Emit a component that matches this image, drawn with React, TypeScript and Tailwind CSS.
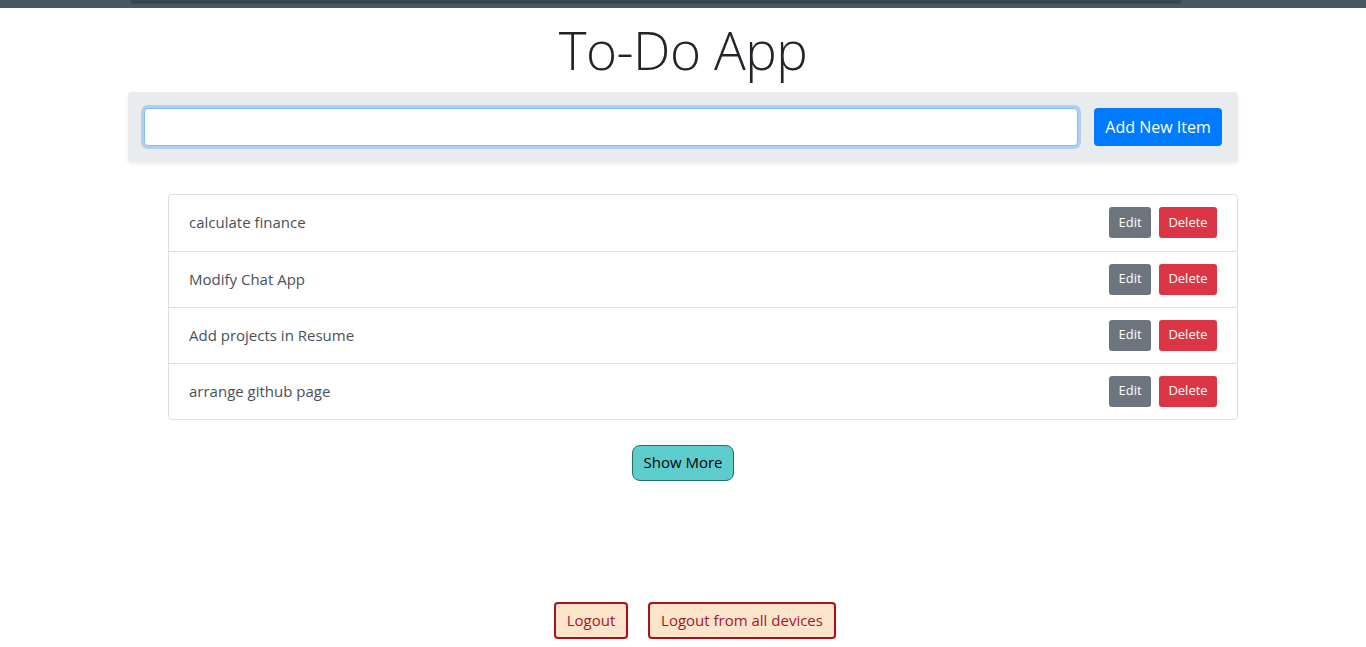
import { useState } from 'react'

const todos = ['calculate finance', 'Modify Chat App', 'Add projects in Resume', 'arrange github page']

export default function App() {
  const [text, setText] = useState('')

  return (
    <div
      className="min-h-[647px] bg-white text-[#212529]"
      style={{ fontFamily: '"Open Sans", "Noto Sans", "Liberation Sans", sans-serif' }}
    >
      {/* Top bar remnant */}
      <div className="h-[8px] bg-[#455a64] pl-[131px]">
        <div className="w-[1050px] h-[2px] bg-[#37474f] rounded-b-md shadow-[0_1px_2px_rgba(0,0,0,0.4)]" />
      </div>

      <div className="w-[1110px] mx-auto">
        <h1 className="text-center text-[53px] font-light leading-[1.2] text-[#212529] mt-[10px] tracking-[-0.5px]">
          To-Do App
        </h1>

        <form
          className="mt-[10px] bg-[#e9ecef] rounded-[4px] shadow-[0_2px_4px_rgba(0,0,0,0.08)] flex items-center gap-4 px-4 py-4"
          onSubmit={(e) => e.preventDefault()}
        >
          <input
            value={text}
            onChange={(e) => setText(e.target.value)}
            className="flex-1 h-[38px] bg-white rounded-[4px] border border-[#80bdff] shadow-[0_0_0_3px_rgba(0,123,255,0.25)] outline-none px-3"
          />
          <button className="h-[38px] w-[128px] bg-[#007bff] text-white text-[16px] rounded-[4px]">
            Add New Item
          </button>
        </form>

        <ul className="ml-[40px] mt-[32px] border border-[#dfdfdf] rounded-[4px]">
          {todos.map((t, i) => (
            <li
              key={t}
              className={
                'h-[56px] flex items-center justify-between pl-[20px] pr-[20px] ' +
                (i > 0 ? 'border-t border-[#dfdfdf]' : '')
              }
            >
              <span className="text-[15px] text-[#495057]">{t}</span>
              <div className="flex gap-2">
                <button className="h-[31px] w-[42px] bg-[#6c757d] text-white text-[13px] rounded-[3px]">Edit</button>
                <button className="h-[31px] w-[58px] bg-[#dc3545] text-white text-[13px] rounded-[3px]">Delete</button>
              </div>
            </li>
          ))}
        </ul>

        <div className="flex justify-center mt-[25px]">
          <button className="h-[36px] w-[102px] bg-[#5ccccc] border border-[#1f6f6f] rounded-[8px] text-[15px] text-black">
            Show More
          </button>
        </div>

        <div className="flex justify-center gap-[20px] mt-[121px] ml-[24px]">
          <button className="h-[37px] w-[74px] bg-[#fde5cb] border-2 border-[#b30d1b] rounded-[4px] text-[15px] text-[#a3152c]">
            Logout
          </button>
          <button className="h-[37px] w-[188px] bg-[#fde5cb] border-2 border-[#b30d1b] rounded-[4px] text-[15px] text-[#a3152c]">
            Logout from all devices
          </button>
        </div>
      </div>
    </div>
  )
}
